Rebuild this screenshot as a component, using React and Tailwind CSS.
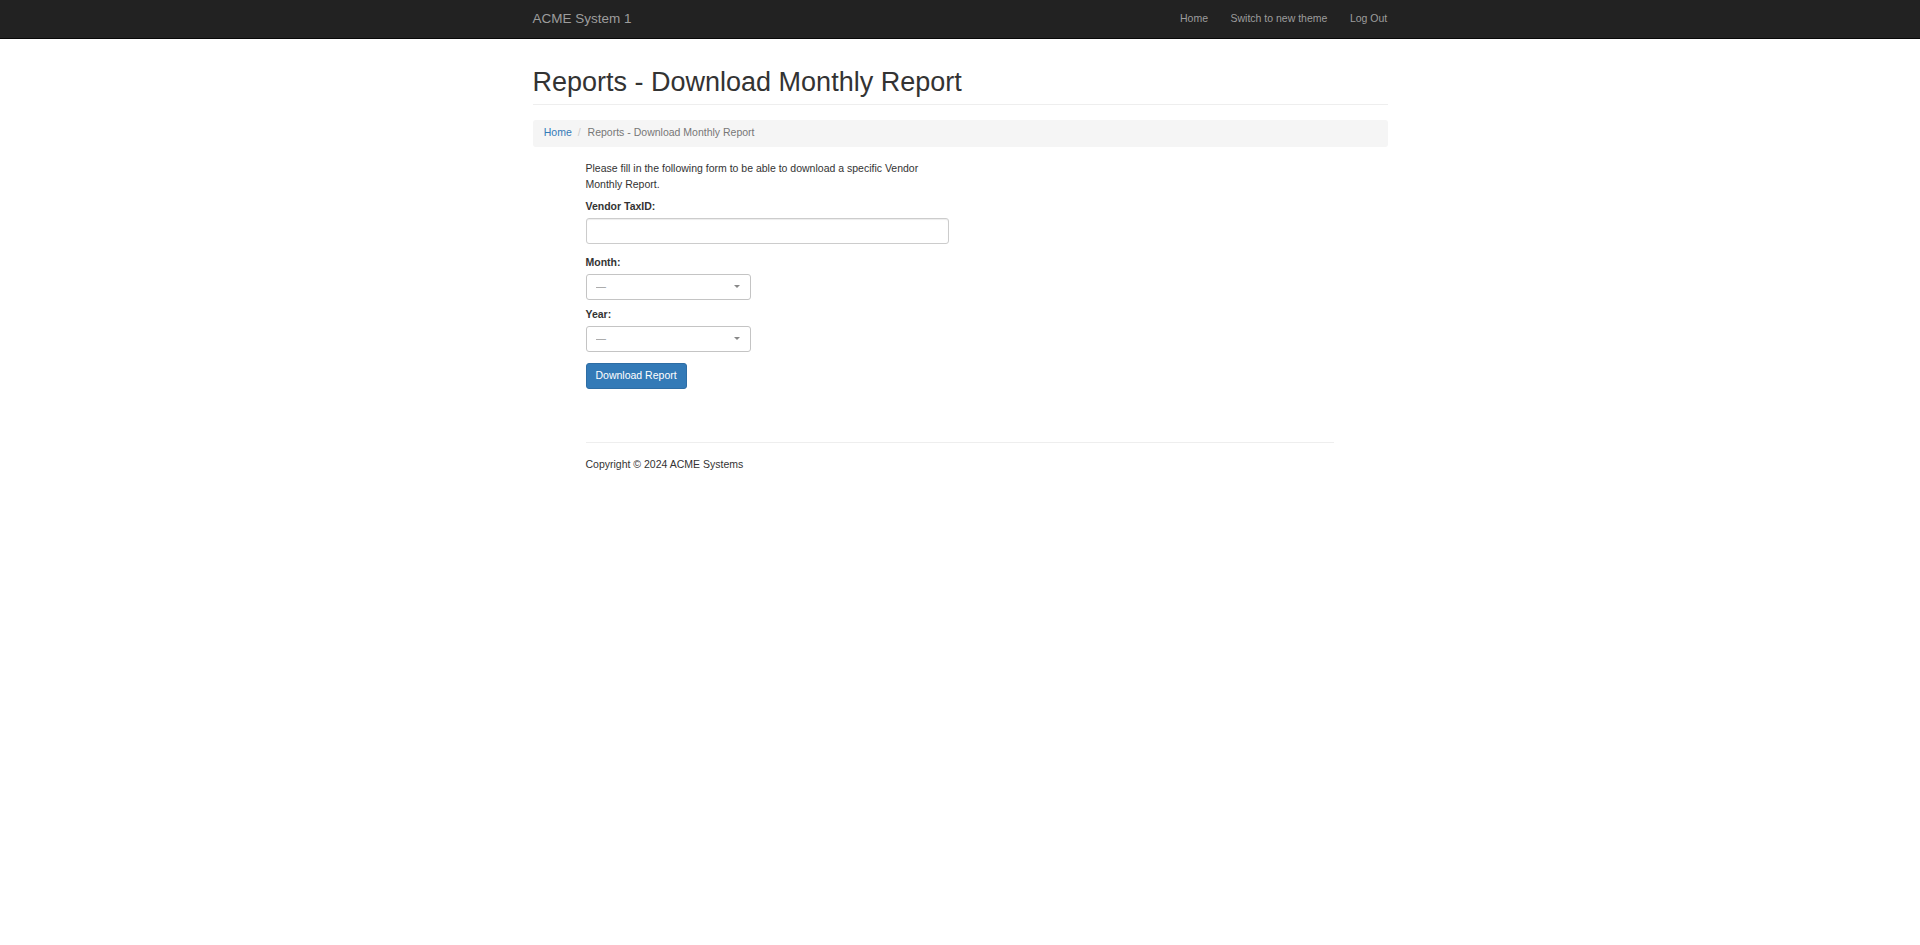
import { useState } from 'react';

const NAV_LINKS = ['Home', 'Switch to new theme', 'Log Out'];

function FakeSelect({ value, onChange }) {
  return (
    <div className="relative w-[165px] h-[26px]">
      <select
        value={value}
        onChange={(e) => onChange(e.target.value)}
        className="appearance-none w-full h-full bg-white border border-[#c4c4c4] rounded-[3px] pl-[9px] pr-[20px] text-[10.5px] text-[#999] outline-none"
      >
        <option value="">—</option>
      </select>
      <span className="pointer-events-none absolute right-[11px] top-[11px] w-0 h-0 border-l-[3px] border-r-[3px] border-t-[3px] border-l-transparent border-r-transparent border-t-[#888]" />
    </div>
  );
}

export default function App() {
  const [taxId, setTaxId] = useState('');
  const [month, setMonth] = useState('');
  const [year, setYear] = useState('');

  return (
    <div className="min-h-screen bg-white text-[#333] font-['Liberation_Sans',Arial,sans-serif]">
      <nav className="h-[39px] bg-[#222] border-b border-[#080808]">
        <div className="w-[855px] mx-auto h-full flex items-center justify-between">
          <span className="text-[13.5px] text-[#9d9d9d]">ACME System 1</span>
          <ul className="flex items-center mr-[-11px]">
            {NAV_LINKS.map((label) => (
              <li key={label}>
                <a href="#" className="block px-[11.25px] text-[10.5px] text-[#9d9d9d] hover:text-white">
                  {label}
                </a>
              </li>
            ))}
          </ul>
        </div>
      </nav>

      <main className="w-[855px] mx-auto">
        <div className="border-b border-[#eee] pt-[29px] pb-[6px]">
          <h1 className="text-[27px] leading-[1.1] text-[#333]">Reports - Download Monthly Report</h1>
        </div>

        <ol className="mt-[15px] h-[27px] flex items-center bg-[#f5f5f5] rounded-[3px] px-[11.25px] text-[10.5px]">
          <li>
            <a href="#" className="text-[#337ab7]">Home</a>
          </li>
          <li className="text-[#777]">
            <span className="pl-[6px] pr-[4px] text-[#ccc]">/{'\u00a0'}</span>
            Reports - Download Monthly Report
          </li>
        </ol>

        <div className="ml-[53px] w-[748px]">
          <form className="w-[363px] pt-[13px] text-[10.5px] leading-[15px]" onSubmit={(e) => e.preventDefault()}>
            <p className="mb-[7px] leading-[16px]">
              Please fill in the following form to be able to download a specific Vendor Monthly Report.
            </p>
            <div className="mb-[11px]">
              <label className="block font-bold mb-[4px]">Vendor TaxID:</label>
              <input
                type="text"
                value={taxId}
                onChange={(e) => setTaxId(e.target.value)}
                className="block w-full h-[26px] border border-[#ccc] rounded-[3px] px-[9px] shadow-[inset_0_1px_1px_rgba(0,0,0,0.075)] outline-none"
              />
            </div>
            <div className="mb-[7px]">
              <label className="block font-bold mb-[4px]">Month:</label>
              <FakeSelect value={month} onChange={setMonth} />
            </div>
            <div className="mb-[11px]">
              <label className="block font-bold mb-[4px]">Year:</label>
              <FakeSelect value={year} onChange={setYear} />
            </div>
            <button
              type="submit"
              className="h-[26px] px-[9px] bg-[#337ab7] border border-[#2e6da4] rounded-[3px] text-white text-[10.5px]"
            >
              Download Report
            </button>
          </form>

          <hr className="mt-[53px] border-t border-[#eee]" />
          <footer className="pt-[14px] text-[10.5px] leading-[15px]">Copyright © 2024 ACME Systems</footer>
        </div>
      </main>
    </div>
  );
}
